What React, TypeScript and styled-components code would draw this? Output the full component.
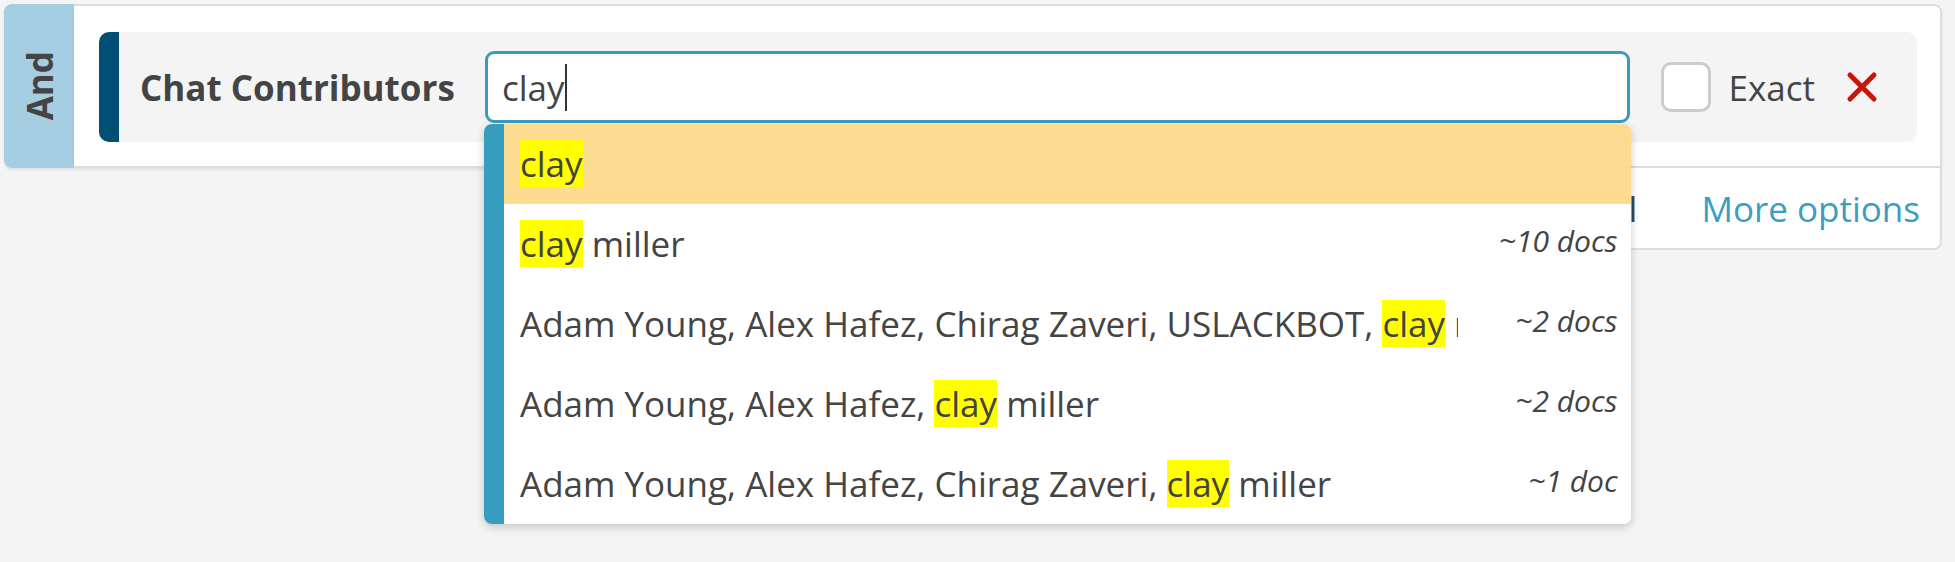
import React from 'react';
import styled, { createGlobalStyle } from 'styled-components';

const GlobalStyle = createGlobalStyle`
  html, body {
    margin: 0;
    background: #f4f4f4;
    font-family: 'Open Sans', 'Liberation Sans', sans-serif;
    color: #444;
  }
`;

const Page = styled.div`
  box-sizing: border-box;
  min-height: 100vh;
  padding: 4px 13px 0 4px;
`;

const Card = styled.div`
  display: flex;
  flex-direction: column;
`;

const Criterion = styled.div`
  display: flex;
  height: 164px;
`;

const AndTab = styled.div`
  width: 70px;
  flex: none;
  background: #a6cee3;
  border-radius: 8px 0 0 8px;
  display: flex;
  align-items: center;
  justify-content: center;
  box-shadow: 0 2px 3px rgba(0, 0, 0, 0.08);

  span {
    writing-mode: vertical-rl;
    transform: rotate(180deg);
    font-size: 35px;
    font-weight: 700;
    color: #444;
  }
`;

const CriterionBody = styled.div`
  flex: 1;
  background: #fff;
  border: 2px solid #ddd;
  border-left: none;
  border-radius: 0 8px 0 0;
  padding: 26px 23px 24px 25px;
  box-shadow: 0 2px 3px rgba(0, 0, 0, 0.08);
`;

const FilterRow = styled.div`
  height: 110px;
  background: #f4f4f4;
  border-radius: 10px;
  display: flex;
  align-items: center;
  padding-right: 39px;
`;

const FieldMarker = styled.div`
  width: 20px;
  align-self: stretch;
  background: #014f74;
  border-radius: 10px 0 0 10px;
`;

const FieldLabel = styled.div`
  box-sizing: border-box;
  width: 366px;
  padding-left: 21px;
  font-size: 35px;
  font-weight: 700;
  white-space: nowrap;
`;

const SearchField = styled.div`
  position: relative;
  flex: 1;
`;

const SearchBox = styled.div`
  box-sizing: border-box;
  height: 72px;
  background: #fff;
  border: 3px solid #3a9cbd;
  border-radius: 9px;
  padding: 0 14px;
  display: flex;
  align-items: center;
  font-size: 35px;
`;

const Caret = styled.span`
  width: 2px;
  height: 47px;
  background: #333;
`;

const Suggestions = styled.ul`
  position: absolute;
  z-index: 10;
  top: calc(100% + 1px);
  left: -1px;
  right: -1px;
  margin: 0;
  padding: 0;
  list-style: none;
  background: #fff;
  border-left: 20px solid #379dbe;
  border-radius: 8px;
  overflow: hidden;
  box-shadow: 0 3px 10px rgba(0, 0, 0, 0.2);
`;

const SuggestionRow = styled.li<{ $active?: boolean }>`
  display: flex;
  align-items: flex-start;
  padding: 16px 13px 16px 16px;
  background: ${(props) => (props.$active ? '#fcdc90' : '#fff')};
`;

const SuggestionLabel = styled.div`
  flex: 1;
  min-width: 0;
  overflow: hidden;
  white-space: nowrap;
  font-size: 35px;
  line-height: 48px;
`;

const Match = styled.span`
  background: #ffff00;
`;

const DocCount = styled.div`
  width: 160px;
  flex: none;
  text-align: right;
  font-size: 30px;
  font-style: italic;
  line-height: 42px;
`;

const Checkbox = styled.div`
  box-sizing: border-box;
  width: 50px;
  height: 50px;
  margin-left: 31px;
  flex: none;
  background: #fff;
  border: 3px solid #ccc;
  border-radius: 10px;
`;

const ExactLabel = styled.span`
  margin-left: 18px;
  font-size: 35px;
`;

const RemoveButton = styled.button`
  margin-left: 31px;
  padding: 0;
  border: none;
  background: none;
  display: flex;
  cursor: pointer;
`;

const Footer = styled.div`
  align-self: flex-end;
  box-sizing: border-box;
  width: 760px;
  height: 82px;
  background: #fff;
  border: 2px solid #ddd;
  border-top: none;
  border-radius: 0 0 8px 8px;
  display: flex;
  align-items: center;
  justify-content: flex-end;
  gap: 64px;
  padding-right: 20px;
  font-size: 35px;
  white-space: nowrap;
`;

const MoreOptions = styled.a`
  color: #3a9ec3;
  text-decoration: none;
`;

type Suggestion = {
  before?: string;
  match: string;
  after?: string;
  count?: string;
};

const suggestions: Suggestion[] = [
  { match: 'clay' },
  { match: 'clay', after: ' miller', count: '~10 docs' },
  {
    before: 'Adam Young, Alex Hafez, Chirag Zaveri, USLACKBOT, ',
    match: 'clay',
    after: ' miller',
    count: '~2 docs',
  },
  {
    before: 'Adam Young, Alex Hafez, ',
    match: 'clay',
    after: ' miller',
    count: '~2 docs',
  },
  {
    before: 'Adam Young, Alex Hafez, Chirag Zaveri, ',
    match: 'clay',
    after: ' miller',
    count: '~1 doc',
  },
];

function RemoveIcon() {
  return (
    <svg width="32" height="32" viewBox="0 0 32 32">
      <path
        d="M4 4 L28 28 M28 4 L4 28"
        stroke="#c8150a"
        strokeWidth="5"
        strokeLinecap="round"
        fill="none"
      />
    </svg>
  );
}

export default function App() {
  return (
    <Page>
      <GlobalStyle />
      <Card>
        <Criterion>
          <AndTab>
            <span>And</span>
          </AndTab>
          <CriterionBody>
            <FilterRow>
              <FieldMarker />
              <FieldLabel>Chat Contributors</FieldLabel>
              <SearchField>
                <SearchBox>
                  clay
                  <Caret />
                </SearchBox>
                <Suggestions>
                  {suggestions.map((item, i) => (
                    <SuggestionRow key={i} $active={i === 0}>
                      <SuggestionLabel>
                        {item.before}
                        <Match>{item.match}</Match>
                        {item.after}
                      </SuggestionLabel>
                      {item.count && <DocCount>{item.count}</DocCount>}
                    </SuggestionRow>
                  ))}
                </Suggestions>
              </SearchField>
              <Checkbox />
              <ExactLabel>Exact</ExactLabel>
              <RemoveButton aria-label="Remove">
                <RemoveIcon />
              </RemoveButton>
            </FilterRow>
          </CriterionBody>
        </Criterion>
        <Footer>
          <span>Clear all</span>
          <MoreOptions href="#">More options</MoreOptions>
        </Footer>
      </Card>
    </Page>
  );
}
